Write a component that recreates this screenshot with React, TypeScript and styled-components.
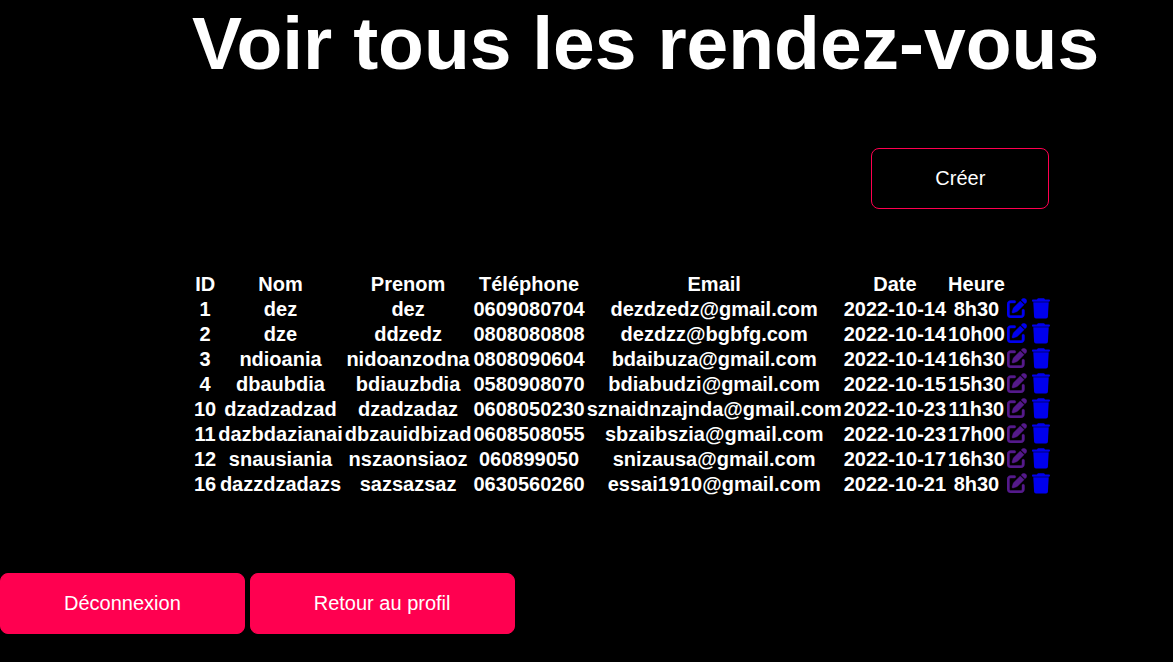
import React from 'react';
import styled, { createGlobalStyle } from 'styled-components';
import { FaPenToSquare } from 'react-icons/fa6';

const GlobalStyle = createGlobalStyle`
  body {
    margin: 0;
    background: #000;
    color: #fff;
    font-family: Arial, 'Liberation Sans', sans-serif;
    font-size: 20px;
    line-height: 23px;
  }
`;

const Content = styled.main`
  width: fit-content;
  margin-left: 192px;
`;

const Title = styled.h1`
  margin: 0;
  font-size: 75px;
  line-height: 86px;
  white-space: nowrap;
`;

const Listing = styled.section`
  width: fit-content;
  padding-top: 62px;
`;

const Toolbar = styled.div`
  display: flex;
  justify-content: flex-end;
  padding: 0 3px 62px 0;
`;

const Button = styled.button<{ $outlined?: boolean }>`
  padding: 18px 63px;
  border: 1px solid #ff0050;
  border-radius: 8px;
  background: ${({ $outlined }) => ($outlined ? '#000' : '#ff0050')};
  color: #fff;
  font: inherit;
  cursor: pointer;
`;

const Table = styled.table`
  border-spacing: 2px;
  font-weight: 700;
  text-align: center;
  white-space: nowrap;

  th,
  td {
    padding: 0;
  }
`;

const IconLink = styled.a<{ $visited?: boolean }>`
  color: ${({ $visited }) => ($visited ? '#551a8b' : '#0000ee')};
`;

const EditIcon = styled(FaPenToSquare)`
  width: 20px;
  height: 20px;
  vertical-align: -2px;
  stroke: currentColor;
  stroke-width: 10px;
`;

const TrashSvg = styled.svg`
  width: 18px;
  height: 21px;
  vertical-align: -3px;
  fill: currentColor;
`;

function TrashIcon() {
  return (
    <TrashSvg viewBox="0 0 18 21" aria-hidden="true">
      <path d="M5 1.4L5.4.7Q5.7.2 6.3.2H11.7Q12.3.2 12.6.7L13 1.4H17Q18 1.4 18 2.5T17 3.7H1Q0 3.7 0 2.5T1 1.4Z" />
      <path d="M1.3 4.2H16.7L15.9 18.7Q15.8 20.5 14 20.5H4Q2.2 20.5 2.1 18.7Z" />
    </TrashSvg>
  );
}

const Footer = styled.footer`
  display: flex;
  gap: 5px;
  padding: 75px 0 28px;
`;

const columns = ['ID', 'Nom', 'Prenom', 'Téléphone', 'Email', 'Date', 'Heure'];

const appointments = [
  ['1', 'dez', 'dez', '0609080704', 'dezdzedz@gmail.com', '2022-10-14', '8h30'],
  ['2', 'dze', 'ddzedz', '0808080808', 'dezdzz@bgbfg.com', '2022-10-14', '10h00'],
  ['3', 'ndioania', 'nidoanzodna', '0808090604', 'bdaibuza@gmail.com', '2022-10-14', '16h30'],
  ['4', 'dbaubdia', 'bdiauzbdia', '0580908070', 'bdiabudzi@gmail.com', '2022-10-15', '15h30'],
  ['10', 'dzadzadzad', 'dzadzadaz', '0608050230', 'sznaidnzajnda@gmail.com', '2022-10-23', '11h30'],
  ['11', 'dazbdazianai', 'dbzauidbizad', '0608508055', 'sbzaibszia@gmail.com', '2022-10-23', '17h00'],
  ['12', 'snausiania', 'nszaonsiaoz', '060899050', 'snizausa@gmail.com', '2022-10-17', '16h30'],
  ['16', 'dazzdzadazs', 'sazsazsaz', '0630560260', 'essai1910@gmail.com', '2022-10-21', '8h30'],
];

export default function App() {
  return (
    <>
      <GlobalStyle />
      <Content>
        <Title>Voir tous les rendez-vous</Title>
        <Listing>
          <Toolbar>
            <Button type="button" $outlined>Créer</Button>
          </Toolbar>
          <Table>
            <thead>
              <tr>
                {columns.map((name) => (
                  <th key={name} scope="col">{name}</th>
                ))}
                <td />
              </tr>
            </thead>
            <tbody>
              {appointments.map((row, index) => (
                <tr key={row[0]}>
                  {row.map((value, column) => (
                    <td key={columns[column]}>{value}</td>
                  ))}
                  <td>
                    <IconLink href={`#modifier-${row[0]}`} aria-label="Modifier" $visited={index > 1}>
                      <EditIcon />
                    </IconLink>{' '}
                    <IconLink href={`#supprimer-${row[0]}`} aria-label="Supprimer">
                      <TrashIcon />
                    </IconLink>
                  </td>
                </tr>
              ))}
            </tbody>
          </Table>
        </Listing>
      </Content>
      <Footer>
        <Button type="button">Déconnexion</Button>
        <Button type="button">Retour au profil</Button>
      </Footer>
    </>
  );
}
